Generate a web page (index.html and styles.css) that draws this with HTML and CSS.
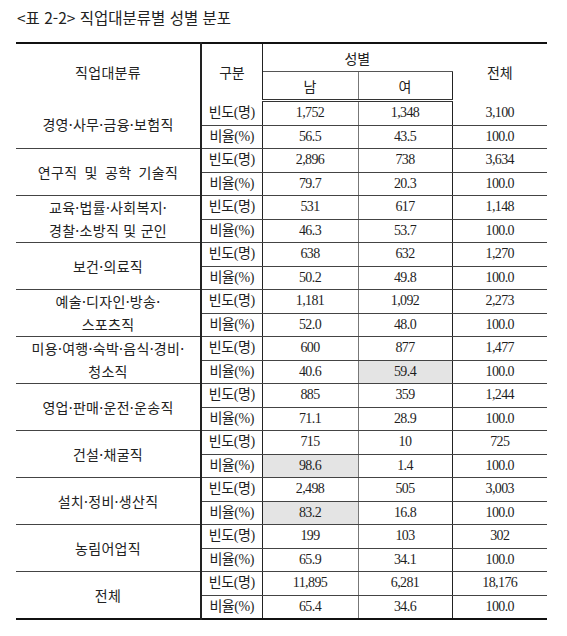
FILE: index.html
```html
<!DOCTYPE html>
<html lang="ko">
<head>
    <meta charset="UTF-8">
    <title>직업대분류별 성별 분포</title>
    <link rel="stylesheet" href="styles.css">
</head>
<body>
<div class="page">
    <h1 class="caption">&lt;표 2-2&gt; 직업대분류별 성별 분포</h1>

    <table class="stats">
        <colgroup>
            <col class="c-job">
            <col class="c-kind">
            <col class="c-male">
            <col class="c-female">
            <col class="c-total">
        </colgroup>
        <thead>
            <tr>
                <th rowspan="2" class="job">직업대분류</th>
                <th rowspan="2" class="kind">구분</th>
                <th colspan="2" class="sex">성별</th>
                <th rowspan="2" class="total">전체</th>
            </tr>
            <tr>
                <th class="male">남</th>
                <th class="female">여</th>
            </tr>
        </thead>
        <tbody>
            <tr class="freq">
                <td rowspan="2" class="job">경영·사무·금융·보험직</td>
                <td class="kind">빈도(명)</td><td class="male">1,752</td><td class="female">1,348</td><td class="total">3,100</td>
            </tr>
            <tr class="rate">
                <td class="kind">비율(%)</td><td class="male">56.5</td><td class="female">43.5</td><td class="total">100.0</td>
            </tr>

            <tr class="freq">
                <td rowspan="2" class="job wide">연구직 및 공학 기술직</td>
                <td class="kind">빈도(명)</td><td class="male">2,896</td><td class="female">738</td><td class="total">3,634</td>
            </tr>
            <tr class="rate">
                <td class="kind">비율(%)</td><td class="male">79.7</td><td class="female">20.3</td><td class="total">100.0</td>
            </tr>

            <tr class="freq">
                <td rowspan="2" class="job">교육·법률·사회복지·<br>경찰·소방직 및 군인</td>
                <td class="kind">빈도(명)</td><td class="male">531</td><td class="female">617</td><td class="total">1,148</td>
            </tr>
            <tr class="rate">
                <td class="kind">비율(%)</td><td class="male">46.3</td><td class="female">53.7</td><td class="total">100.0</td>
            </tr>

            <tr class="freq">
                <td rowspan="2" class="job">보건·의료직</td>
                <td class="kind">빈도(명)</td><td class="male">638</td><td class="female">632</td><td class="total">1,270</td>
            </tr>
            <tr class="rate">
                <td class="kind">비율(%)</td><td class="male">50.2</td><td class="female">49.8</td><td class="total">100.0</td>
            </tr>

            <tr class="freq">
                <td rowspan="2" class="job">예술·디자인·방송·<br>스포츠직</td>
                <td class="kind">빈도(명)</td><td class="male">1,181</td><td class="female">1,092</td><td class="total">2,273</td>
            </tr>
            <tr class="rate">
                <td class="kind">비율(%)</td><td class="male">52.0</td><td class="female">48.0</td><td class="total">100.0</td>
            </tr>

            <tr class="freq">
                <td rowspan="2" class="job">미용·여행·숙박·음식·경비·<br>청소직</td>
                <td class="kind">빈도(명)</td><td class="male">600</td><td class="female">877</td><td class="total">1,477</td>
            </tr>
            <tr class="rate">
                <td class="kind">비율(%)</td><td class="male">40.6</td><td class="female mark">59.4</td><td class="total">100.0</td>
            </tr>

            <tr class="freq">
                <td rowspan="2" class="job">영업·판매·운전·운송직</td>
                <td class="kind">빈도(명)</td><td class="male">885</td><td class="female">359</td><td class="total">1,244</td>
            </tr>
            <tr class="rate">
                <td class="kind">비율(%)</td><td class="male">71.1</td><td class="female">28.9</td><td class="total">100.0</td>
            </tr>

            <tr class="freq">
                <td rowspan="2" class="job">건설·채굴직</td>
                <td class="kind">빈도(명)</td><td class="male">715</td><td class="female">10</td><td class="total">725</td>
            </tr>
            <tr class="rate">
                <td class="kind">비율(%)</td><td class="male mark">98.6</td><td class="female">1.4</td><td class="total">100.0</td>
            </tr>

            <tr class="freq">
                <td rowspan="2" class="job">설치·정비·생산직</td>
                <td class="kind">빈도(명)</td><td class="male">2,498</td><td class="female">505</td><td class="total">3,003</td>
            </tr>
            <tr class="rate">
                <td class="kind">비율(%)</td><td class="male mark">83.2</td><td class="female">16.8</td><td class="total">100.0</td>
            </tr>

            <tr class="freq">
                <td rowspan="2" class="job">농림어업직</td>
                <td class="kind">빈도(명)</td><td class="male">199</td><td class="female">103</td><td class="total">302</td>
            </tr>
            <tr class="rate">
                <td class="kind">비율(%)</td><td class="male">65.9</td><td class="female">34.1</td><td class="total">100.0</td>
            </tr>

            <tr class="freq">
                <td rowspan="2" class="job">전체</td>
                <td class="kind">빈도(명)</td><td class="male">11,895</td><td class="female">6,281</td><td class="total">18,176</td>
            </tr>
            <tr class="rate last">
                <td class="kind">비율(%)</td><td class="male">65.4</td><td class="female">34.6</td><td class="total">100.0</td>
            </tr>
        </tbody>
    </table>
</div>
</body>
</html>
```

FILE: styles.css
```css
body {
    margin: 0;
    background-color: #fff;
    color: #1e1e1e;
    font-family: "Liberation Serif", "Noto Sans CJK KR", serif;
}

.page {
    padding: 6px 20px 0 16px;
}

.caption {
    margin: 0 0 13px 1px;
    font-family: "Noto Sans CJK KR", sans-serif;
    font-size: 15.5px;
    font-weight: normal;
    line-height: 23px;
    letter-spacing: 0;
    color: #222;
}

.stats {
    width: 531px;
    table-layout: fixed;
    border-collapse: collapse;
    border-top: 2px solid #111;
    border-bottom: 2px solid #111;
    font-size: 14px;
}

.c-job { width: 185px; }
.c-kind { width: 61px; }
.c-male { width: 96px; }
.c-female { width: 94px; }
.c-total { width: 95px; }

.stats th {
    height: 27px;
    padding: 0;
    font-family: "Noto Sans CJK KR", sans-serif;
    font-weight: normal;
    font-size: 14px;
    color: #222;
    text-align: center;
    vertical-align: middle;
}

.stats thead tr:last-child th {
    border-bottom: 3px double #333;
}

.stats th.sex {
    border-bottom: 1px solid #555;
}

.stats td {
    height: 22.5px;
    padding: 0;
    text-align: center;
    vertical-align: middle;
    line-height: 20px;
    letter-spacing: -0.6px;
    border-bottom: 1px solid #444;
    white-space: nowrap;
}

.stats .job {
    border-right: 2px solid #222;
    font-family: "Noto Sans CJK KR", sans-serif;
    font-size: 14px;
    line-height: 23px;
    letter-spacing: 0.3px;
    color: #222;
}

.stats .job.wide {
    word-spacing: 3px;
}

.stats .kind {
    border-right: 1px solid #222;
    font-size: 14px;
    letter-spacing: -0.4px;
}

.stats .male {
    border-right: 1px solid #777;
}

.stats .female {
    border-right: 1px solid #222;
}

.stats .mark {
    background-color: #e4e4e4;
}

.stats tr.last td {
    border-bottom: none;
}
```
